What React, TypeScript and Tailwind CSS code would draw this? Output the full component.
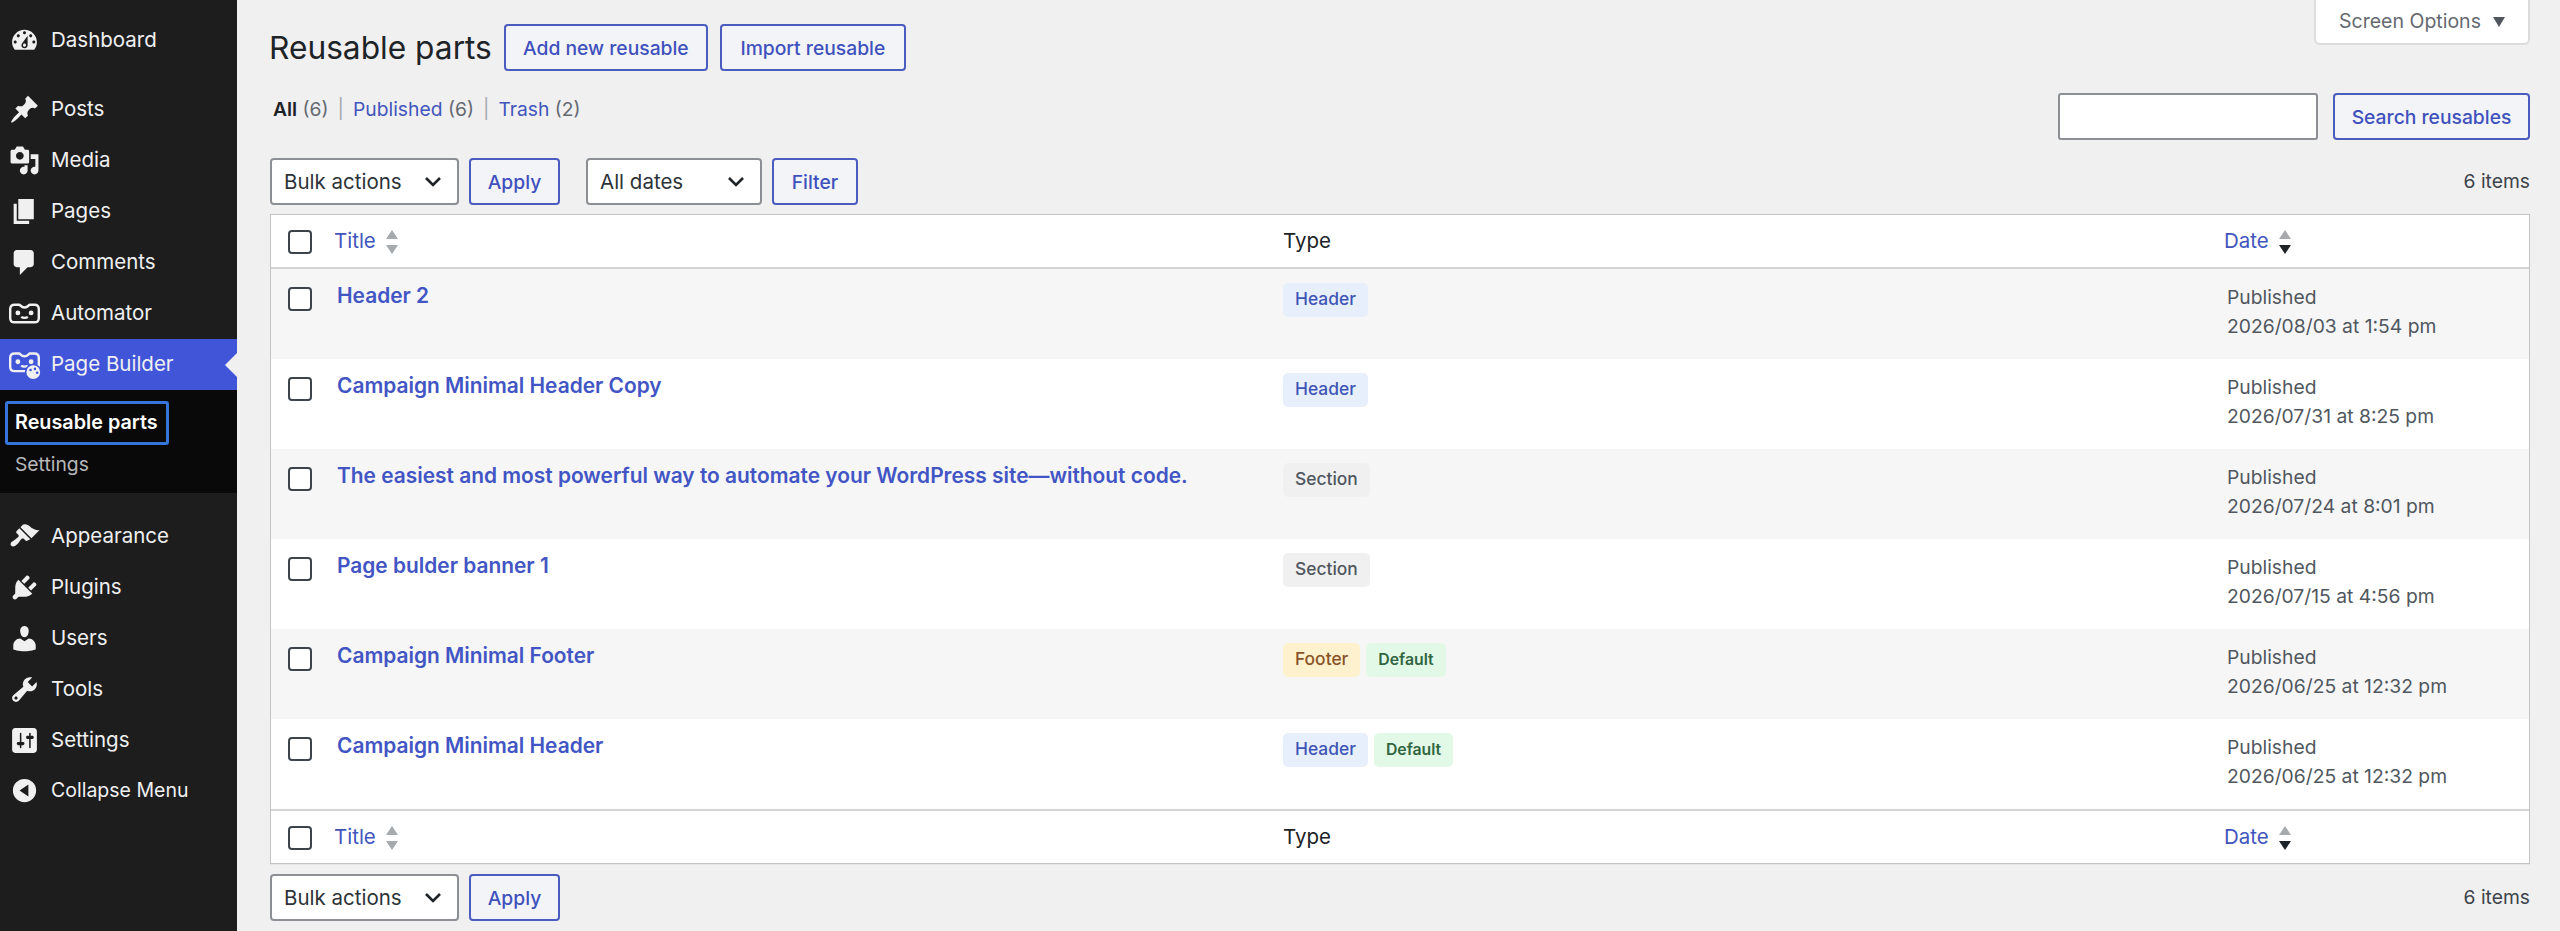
const FONT = "font-['Inter','Liberation_Sans',sans-serif]";

const ICONS: Record<string, string> = {
  dashboard:
    "M3.76 16h12.48c1.1-1.37 1.76-3.11 1.76-5 0-4.42-3.58-8-8-8s-8 3.58-8 8c0 1.89.66 3.63 1.76 5zM10 4c.55 0 1 .45 1 1s-.45 1-1 1-1-.45-1-1 .45-1 1-1zM6 6c.55 0 1 .45 1 1s-.45 1-1 1-1-.45-1-1 .45-1 1-1zm8 0c.55 0 1 .45 1 1s-.45 1-1 1-1-.45-1-1 .45-1 1-1zm-5.37 5.55L12 7v6c0 1.1-.9 2-2 2s-2-.9-2-2c0-.57.24-1.08.63-1.45zM4 10c.55 0 1 .45 1 1s-.45 1-1 1-1-.45-1-1 .45-1 1-1zm12 0c.55 0 1 .45 1 1s-.45 1-1 1-1-.45-1-1 .45-1 1-1zm-5 3c0-.55-.45-1-1-1s-1 .45-1 1 .45 1 1 1 1-.45 1-1z",
  posts:
    "M10.44 3.02l1.82-1.82 6.36 6.35-1.83 1.82c-1.05-.68-2.48-.57-3.41.36l-.75.75c-.92.93-1.04 2.35-.35 3.41l-1.83 1.82-2.41-2.41-2.8 2.79c-.42.42-3.38 2.71-3.8 2.29s1.86-3.39 2.28-3.81l2.79-2.79L4.1 9.36l1.83-1.82c1.05.69 2.48.57 3.4-.36l.75-.75c.93-.92 1.05-2.35.36-3.41z",
  media:
    "M13 11V4c0-.55-.45-1-1-1h-1.67L9 1H5L3.67 3H2c-.55 0-1 .45-1 1v7c0 .55.45 1 1 1h10c.55 0 1-.45 1-1zM7 4.5c1.38 0 2.5 1.12 2.5 2.5S8.38 9.5 7 9.5 4.5 8.38 4.5 7 5.62 4.5 7 4.5zM14 6h5v10.5c0 1.38-1.12 2.5-2.5 2.5S14 17.88 14 16.5s1.12-2.5 2.5-2.5c.17 0 .34.02.5.05V9h-3V6zm-4 8.05V13h2v3.5c0 1.38-1.12 2.5-2.5 2.5S7 17.88 7 16.5 8.12 14 9.5 14c.17 0 .34.02.5.05z",
  pages: "M6 15V2h10v13H6zm-1 1h8v2H3V5h2v11z",
  comments:
    "M5 2h9c1.1 0 2 .9 2 2v7c0 1.1-.9 2-2 2h-2l-5 5v-5H5c-1.1 0-2-.9-2-2V4c0-1.1.9-2 2-2z",
  appearance:
    "M14.48 11.06L7.41 3.99l1.5-1.5c.5-.56 2.3-.47 3.51.32 1.21.8 1.43 1.28 2.91 2.1 1.18.64 2.45 1.26 4.45.85zm-.71.71L6.7 4.7 4.93 6.47c-.39.39-.39 1.02 0 1.41l1.06 1.06c.39.39.39 1.03 0 1.42-.6.6-1.43 1.11-2.21 1.69-.35.26-.7.53-1.01.84C1.43 13.23.4 14.89 1.5 16c1.1 1.1 2.77.07 4.11-1.27.31-.31.58-.66.84-1.01.58-.78 1.09-1.61 1.69-2.21.39-.39 1.02-.39 1.41 0l1.06 1.06c.39.39 1.02.39 1.41 0z",
  plugins:
    "M13.11 4.36L9.87 7.6 8 5.73l3.24-3.24c.35-.34 1.05-.2 1.56.32.52.51.66 1.21.31 1.55zm-8 1.77l.91-1.12 9.01 9.01-1.19.84c-.71.71-2.63 1.16-3.82 1.16H6.14L4.9 17.26c-.59.59-1.54.59-2.12 0-.59-.58-.59-1.53 0-2.12l1.24-1.24v-3.88c0-1.13.4-3.19 1.09-3.89zm7.26 3.97l3.24-3.24c.34-.35 1.04-.21 1.55.31.52.51.66 1.21.31 1.55l-3.24 3.25z",
  users:
    "M10 9.25c-2.27 0-2.73-3.44-2.73-3.44C7 4.02 7.82 2 9.97 2c2.16 0 2.98 2.02 2.71 3.81 0 0-.41 3.44-2.68 3.44zm0 2.57L12.72 10c2.39 0 4.52 2.33 4.52 4.53v2.49s-3.65 1.13-7.24 1.13c-3.65 0-7.24-1.13-7.24-1.13v-2.49c0-2.25 1.94-4.48 4.47-4.48z",
  tools:
    "M16.68 9.77c-1.34 1.34-3.3 1.67-4.95.99l-5.41 6.52c-.99.99-2.59.99-3.58 0s-.99-2.59 0-3.57l6.52-5.42c-.68-1.65-.35-3.61.99-4.95 1.28-1.28 3.12-1.62 4.72-1.06l-2.89 2.89 2.82 2.82 2.86-2.87c.53 1.58.18 3.39-1.08 4.65zM3.81 16.21c.4.39 1.04.39 1.43 0 .4-.4.4-1.04 0-1.43-.39-.4-1.03-.4-1.43 0-.39.39-.39 1.03 0 1.43z",
  settings:
    "M18 16V4c0-1.1-.9-2-2-2H4c-1.1 0-2 .9-2 2v12c0 1.1.9 2 2 2h12c1.1 0 2-.9 2-2zM8 11h1c.55 0 1 .45 1 1s-.45 1-1 1H8v1.5c0 .28-.22.5-.5.5s-.5-.22-.5-.5V13H6c-.55 0-1-.45-1-1s.45-1 1-1h1V5.5c0-.28.22-.5.5-.5s.5.22.5.5V11zm5-2h-1c-.55 0-1-.45-1-1s.45-1 1-1h1V5.5c0-.28.22-.5.5-.5s.5.22.5.5V7h1c.55 0 1 .45 1 1s-.45 1-1 1h-1v5.5c0 .28-.22.5-.5.5s-.5-.22-.5-.5V9z",
  collapse:
    "M10 2.5a7.5 7.5 0 1 1 0 15 7.5 7.5 0 0 1 0-15zM12.5 6.2L6.8 10l5.7 3.8z",
};

const Dashicon = ({ name }: { name: string }) => (
  <svg viewBox="0 0 20 20" className="h-[31px] w-[31px] fill-[#f0f0f1]">
    <path fillRule="evenodd" d={ICONS[name]} />
  </svg>
);

/** Robot face used by the Automator and Page Builder entries. */
const RobotIcon = ({ palette }: { palette?: boolean }) => (
  <svg viewBox={palette ? "0 0 30 28" : "0 -2 30 28"} className="h-[31px] w-[33px]" fill="none">
    <path
      d="M6 4h4c1.500 0 1.500 2.500 5 2.500s3.500-2.500 5-2.500h4c2.500 0 4 1.500 4 4v8c0 2.500-1.500 4-4 4H6c-2.500 0-4-1.500-4-4V8c0-2.500 1.500-4 4-4z"
      stroke="#f0f0f1"
      strokeWidth="2.200"
    />
    <circle cx="9" cy="11.500" r="2.200" fill="#f0f0f1" />
    <circle cx="21" cy="11.500" r="2.200" fill="#f0f0f1" />
    <path d="M12 15c1.500 1.300 4.500 1.300 6 0" stroke="#f0f0f1" strokeWidth="2" />
    {palette && (
      <>
        <circle cx="23" cy="21" r="7" fill="#f0f0f1" stroke="#4155d9" strokeWidth="1.500" />
        <circle cx="20.500" cy="19" r="1.200" fill="#4155d9" />
        <circle cx="24.500" cy="18" r="1.200" fill="#4155d9" />
        <circle cx="26.500" cy="21.500" r="1.200" fill="#4155d9" />
      </>
    )}
  </svg>
);

const MenuItem = ({
  icon,
  label,
  className = "",
}: {
  icon: React.ReactNode;
  label: string;
  className?: string;
}) => (
  <div className={`flex h-[51px] items-center text-[20.5px] text-[#f0f0f1] ${className}`}>
    <div className="flex w-[51px] shrink-0 justify-center pr-[3px]">{icon}</div>
    <span>{label}</span>
  </div>
);

const Sidebar = () => (
  <aside className="flex h-[931px] w-[237px] shrink-0 flex-col bg-[#1d1d1e]">
    <MenuItem className="mt-[15px]" icon={<Dashicon name="dashboard" />} label="Dashboard" />
    <div className="h-[18px]" />
    <MenuItem icon={<Dashicon name="posts" />} label="Posts" />
    <MenuItem icon={<Dashicon name="media" />} label="Media" />
    <MenuItem icon={<Dashicon name="pages" />} label="Pages" />
    <MenuItem icon={<Dashicon name="comments" />} label="Comments" />
    <MenuItem icon={<RobotIcon />} label="Automator" />
    <div className="relative bg-[#4155d9]">
      <MenuItem icon={<RobotIcon palette />} label="Page Builder" />
      <div className="absolute right-0 top-[14px] h-0 w-0 border-y-[12px] border-r-[12px] border-y-transparent border-r-[#f0f0f1]" />
    </div>
    <div className="flex h-[103px] flex-col bg-[#090909] pl-[5px] pt-[11px]">
      <div className="flex h-[44px] w-[164px] items-center rounded-[3px] border-[3px] border-[#3574d8] pl-[7px] text-[19.800px] font-semibold text-white">
        Reusable parts
      </div>
      <div className="mt-[5px] pl-[10px] text-[19.300px] text-[#b8b9ba]">Settings</div>
    </div>
    <div className="h-[18px]" />
    <MenuItem icon={<Dashicon name="appearance" />} label="Appearance" />
    <MenuItem icon={<Dashicon name="plugins" />} label="Plugins" />
    <MenuItem icon={<Dashicon name="users" />} label="Users" />
    <MenuItem icon={<Dashicon name="tools" />} label="Tools" />
    <MenuItem icon={<Dashicon name="settings" />} label="Settings" />
    <MenuItem className="!text-[19.500px] -mt-[1px]" icon={<Dashicon name="collapse" />} label="Collapse Menu" />
  </aside>
);

const OutlineButton = ({ label, className }: { label: string; className: string }) => (
  <button className={`flex h-[47px] items-center justify-center rounded-[4px] border-2 border-[#4a5cc0] bg-[#f3f4f7] pt-[2px] text-[19.300px] font-medium text-[#3f51bd] ${className}`}>
    {label}
  </button>
);

const Dropdown = ({ label, className }: { label: string; className: string }) => (
  <div className={`flex h-[47px] items-center justify-between rounded-[4px] border-2 border-[#8c8f94] bg-white pl-[12px] pr-[14px] text-[20.500px] text-[#2c3338] ${className}`}>
    <span className="pt-[2px]">{label}</span>
    <svg viewBox="0 0 20 20" className="h-[20px] w-[20px]" fill="none" stroke="#1d2327" strokeWidth="2.600">
      <path d="M3 7l7 7 7-7" />
    </svg>
  </div>
);

const Checkbox = () => (
  <div className="h-[24px] w-[24px] rounded-[4px] border-2 border-[#3c434a] bg-white" />
);

const SortArrows = ({ active }: { active?: boolean }) => (
  <svg viewBox="0 0 14 26" className="ml-[9px] h-[26px] w-[14px]">
    <path d="M7 1l6 9H1z" fill="#a7aaad" />
    <path d="M7 25l6-9H1z" fill={active ? "#1d2327" : "#a7aaad"} />
  </svg>
);

const BADGES = {
  Header: "bg-[#e8effc] text-[#3f55b5] font-medium text-[17.400px]",
  Section: "bg-[#f0f0f1] text-[#50575e] font-medium text-[17.400px]",
  Footer: "bg-[#fdf2cd] text-[#8a5229] font-medium text-[17.400px]",
  Default: "bg-[#e3f9e7] text-[#2f6640] font-semibold text-[15.800px]",
};

const Badge = ({ type }: { type: keyof typeof BADGES }) => (
  <span className={`flex h-[34px] items-center rounded-[5px] px-[12px] ${BADGES[type]}`}>
    {type}
  </span>
);

const ROWS: { title: string; badges: (keyof typeof BADGES)[]; date: string }[] = [
  { title: "Header 2", badges: ["Header"], date: "2026/08/03 at 1:54 pm" },
  { title: "Campaign Minimal Header Copy", badges: ["Header"], date: "2026/07/31 at 8:25 pm" },
  {
    title: "The easiest and most powerful way to automate your WordPress site—without code.",
    badges: ["Section"],
    date: "2026/07/24 at 8:01 pm",
  },
  { title: "Page bulder banner 1", badges: ["Section"], date: "2026/07/15 at 4:56 pm" },
  { title: "Campaign Minimal Footer", badges: ["Footer", "Default"], date: "2026/06/25 at 12:32 pm" },
  { title: "Campaign Minimal Header", badges: ["Header", "Default"], date: "2026/06/25 at 12:32 pm" },
];

const COLUMNS = "grid grid-cols-[65px_947px_941px_1fr]";

const HeadRow = ({ className }: { className: string }) => (
  <div className={`${COLUMNS} h-[54px] items-center bg-white pt-[2px] text-[20.500px] ${className}`}>
    <div className="pl-[17px]">
      <Checkbox />
    </div>
    <div className="-ml-[2px] flex items-center text-[#4255bd]">
      Title
      <SortArrows />
    </div>
    <div className="text-[#1d2327]">Type</div>
    <div className="flex items-center text-[#4255bd]">
      Date
      <SortArrows active />
    </div>
  </div>
);

const Table = () => (
  <div className="mt-[9px] border border-[#c3c4c7] bg-white shadow-[0_1px_1px_rgba(0,0,0,0.04)]">
    <HeadRow className="border-b-2 border-[#d4d5d7]" />
    {ROWS.map((row, index) => (
      <div
        key={row.date + index}
        className={`${COLUMNS} h-[90px] ${index % 2 === 0 ? "bg-[#f6f6f7]" : "bg-white"}`}
      >
        <div className="pl-[17px] pt-[18px]">
          <Checkbox />
        </div>
        <div className="pl-[1px] pt-[12px] text-[20.900px] leading-[30px] font-semibold text-[#4255c4]">
          {row.title}
        </div>
        <div className="flex items-start gap-[6px] pt-[14px]">
          {row.badges.map((badge) => (
            <Badge key={badge} type={badge} />
          ))}
        </div>
        <div className="pl-[3px] pt-[14px] text-[19.300px] leading-[29px] text-[#50575e]">
          <div>Published</div>
          <div>{row.date}</div>
        </div>
      </div>
    ))}
    <HeadRow className="border-t-2 border-[#d4d5d7]" />
  </div>
);

export default function App() {
  return (
    <div className={`flex h-[931px] overflow-hidden bg-[#f0f0f1] ${FONT}`}>
      <Sidebar />
      <main className="relative flex-1 pl-[33px] pr-[30px] pt-[24px]">
        <div className="absolute right-[30px] top-0 flex h-[45px] w-[216px] items-center justify-center gap-[12px] rounded-b-[6px] border-x-2 border-b-2 border-[#dcdcde] bg-white text-[19.500px] text-[#646970]">
          Screen Options
          <svg viewBox="0 0 12 10" className="h-[10px] w-[12px] fill-[#50575e]">
            <path d="M0 0h12L6 10z" />
          </svg>
        </div>

        <div className="flex items-center gap-[12px]">
          <h1 className="-ml-[1px] text-[31.700px] text-[#1d2327]">Reusable parts</h1>
          <div className="flex gap-[12px]">
            <OutlineButton label="Add new reusable" className="w-[204px]" />
            <OutlineButton label="Import reusable" className="w-[186px]" />
          </div>
        </div>

        <div className="mt-[21px] flex h-[47px] justify-between">
          <div className="flex gap-[9px] pl-[3px] pt-[2px] text-[19.300px] leading-[28px] text-[#646970]">
            <span>
              <b className="font-semibold text-[#1d2327]">All</b> (6)
            </span>
            <span className="text-[#a7aaad]">|</span>
            <span>
              <span className="text-[#4255bd]">Published</span> (6)
            </span>
            <span className="text-[#a7aaad]">|</span>
            <span>
              <span className="text-[#4255bd]">Trash</span> (2)
            </span>
          </div>
          <div className="flex gap-[15px]">
            <input className="h-[47px] w-[260px] rounded-[3px] border-2 border-[#8c8f94] bg-white" />
            <OutlineButton label="Search reusables" className="w-[197px]" />
          </div>
        </div>

        <div className="mt-[18px] flex items-center">
          <Dropdown label="Bulk actions" className="w-[189px]" />
          <OutlineButton label="Apply" className="ml-[10px] w-[91px]" />
          <Dropdown label="All dates" className="ml-[26px] w-[176px]" />
          <OutlineButton label="Filter" className="ml-[10px] w-[86px]" />
          <span className="ml-auto text-[19.300px] text-[#3c434a]">6 items</span>
        </div>

        <Table />

        <div className="mt-[10px] flex items-center">
          <Dropdown label="Bulk actions" className="w-[189px]" />
          <OutlineButton label="Apply" className="ml-[10px] w-[91px]" />
          <span className="ml-auto text-[19.300px] text-[#3c434a]">6 items</span>
        </div>
      </main>
    </div>
  );
}
